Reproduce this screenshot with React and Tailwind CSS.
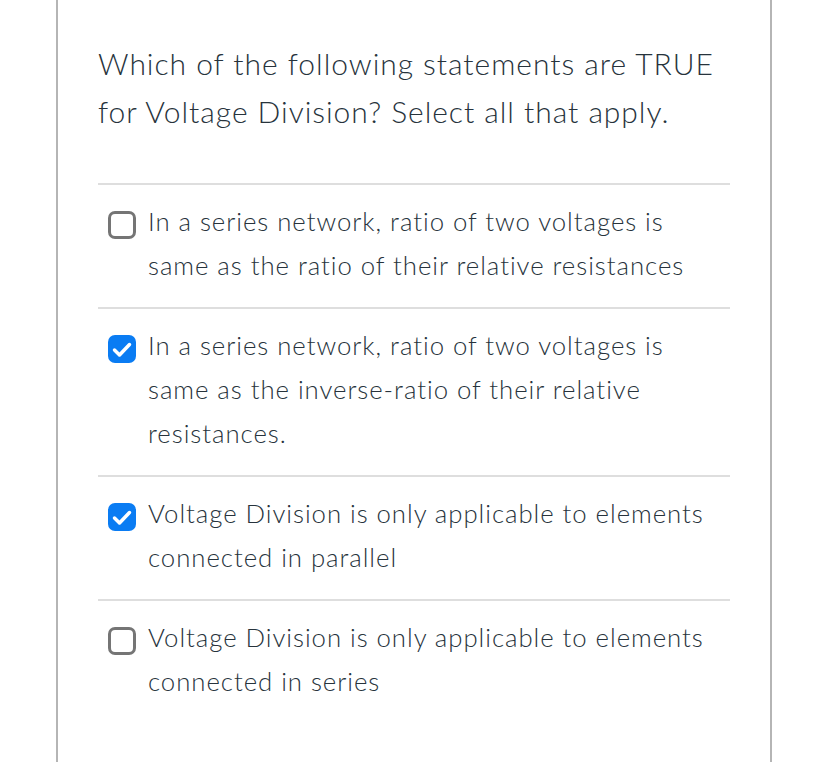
import React from "react";

const options = [
  { text: "In a series network, ratio of two voltages is same as the ratio of their relative resistances", checked: false },
  { text: "In a series network, ratio of two voltages is same as the inverse-ratio of their relative resistances.", checked: true },
  { text: "Voltage Division is only applicable to elements connected in parallel", checked: true },
  { text: "Voltage Division is only applicable to elements connected in series", checked: false },
];

function Box({ checked }) {
  if (checked) {
    return (
      <div className="w-[28px] h-[28px] rounded-[7px] bg-[#0a7cf3] shrink-0">
        <svg width="28" height="28" viewBox="0 0 28 28" fill="none" className="block">
          <path d="M6.5 15 L11.5 20 L21.5 9.5" stroke="white" strokeWidth="3.5" strokeLinecap="round" strokeLinejoin="round" />
        </svg>
      </div>
    );
  }
  return <div className="w-[28px] h-[28px] rounded-[7px] border-[3px] border-[#757575] bg-white shrink-0" />;
}

export default function App() {
  return (
    <div className="w-[828px] h-[762px] bg-white overflow-hidden font-light tracking-[0.06em]" style={{ fontFamily: "Lato, 'Open Sans', sans-serif" }}>
      <div className="ml-[56px] w-[716px] h-full border-x-2 border-[#b5b5b5] px-10 pt-[39px]">
        <div className="text-[30px] leading-[48px] text-[#27333c] mb-[48px]">
          Which of the following statements are TRUE for Voltage Division? Select all that apply.
        </div>
        {options.map((o, i) => (
          <div key={i} className="border-t-2 border-[#dedede] pt-[14px] pb-[20px] pl-[10px] flex gap-[12px]">
            <div className="pt-[12px] shrink-0">
              <Box checked={o.checked} />
            </div>
            <div className="text-[25.75px] leading-[44px] text-[#27333c] pr-2">{o.text}</div>
          </div>
        ))}
      </div>
    </div>
  );
}
